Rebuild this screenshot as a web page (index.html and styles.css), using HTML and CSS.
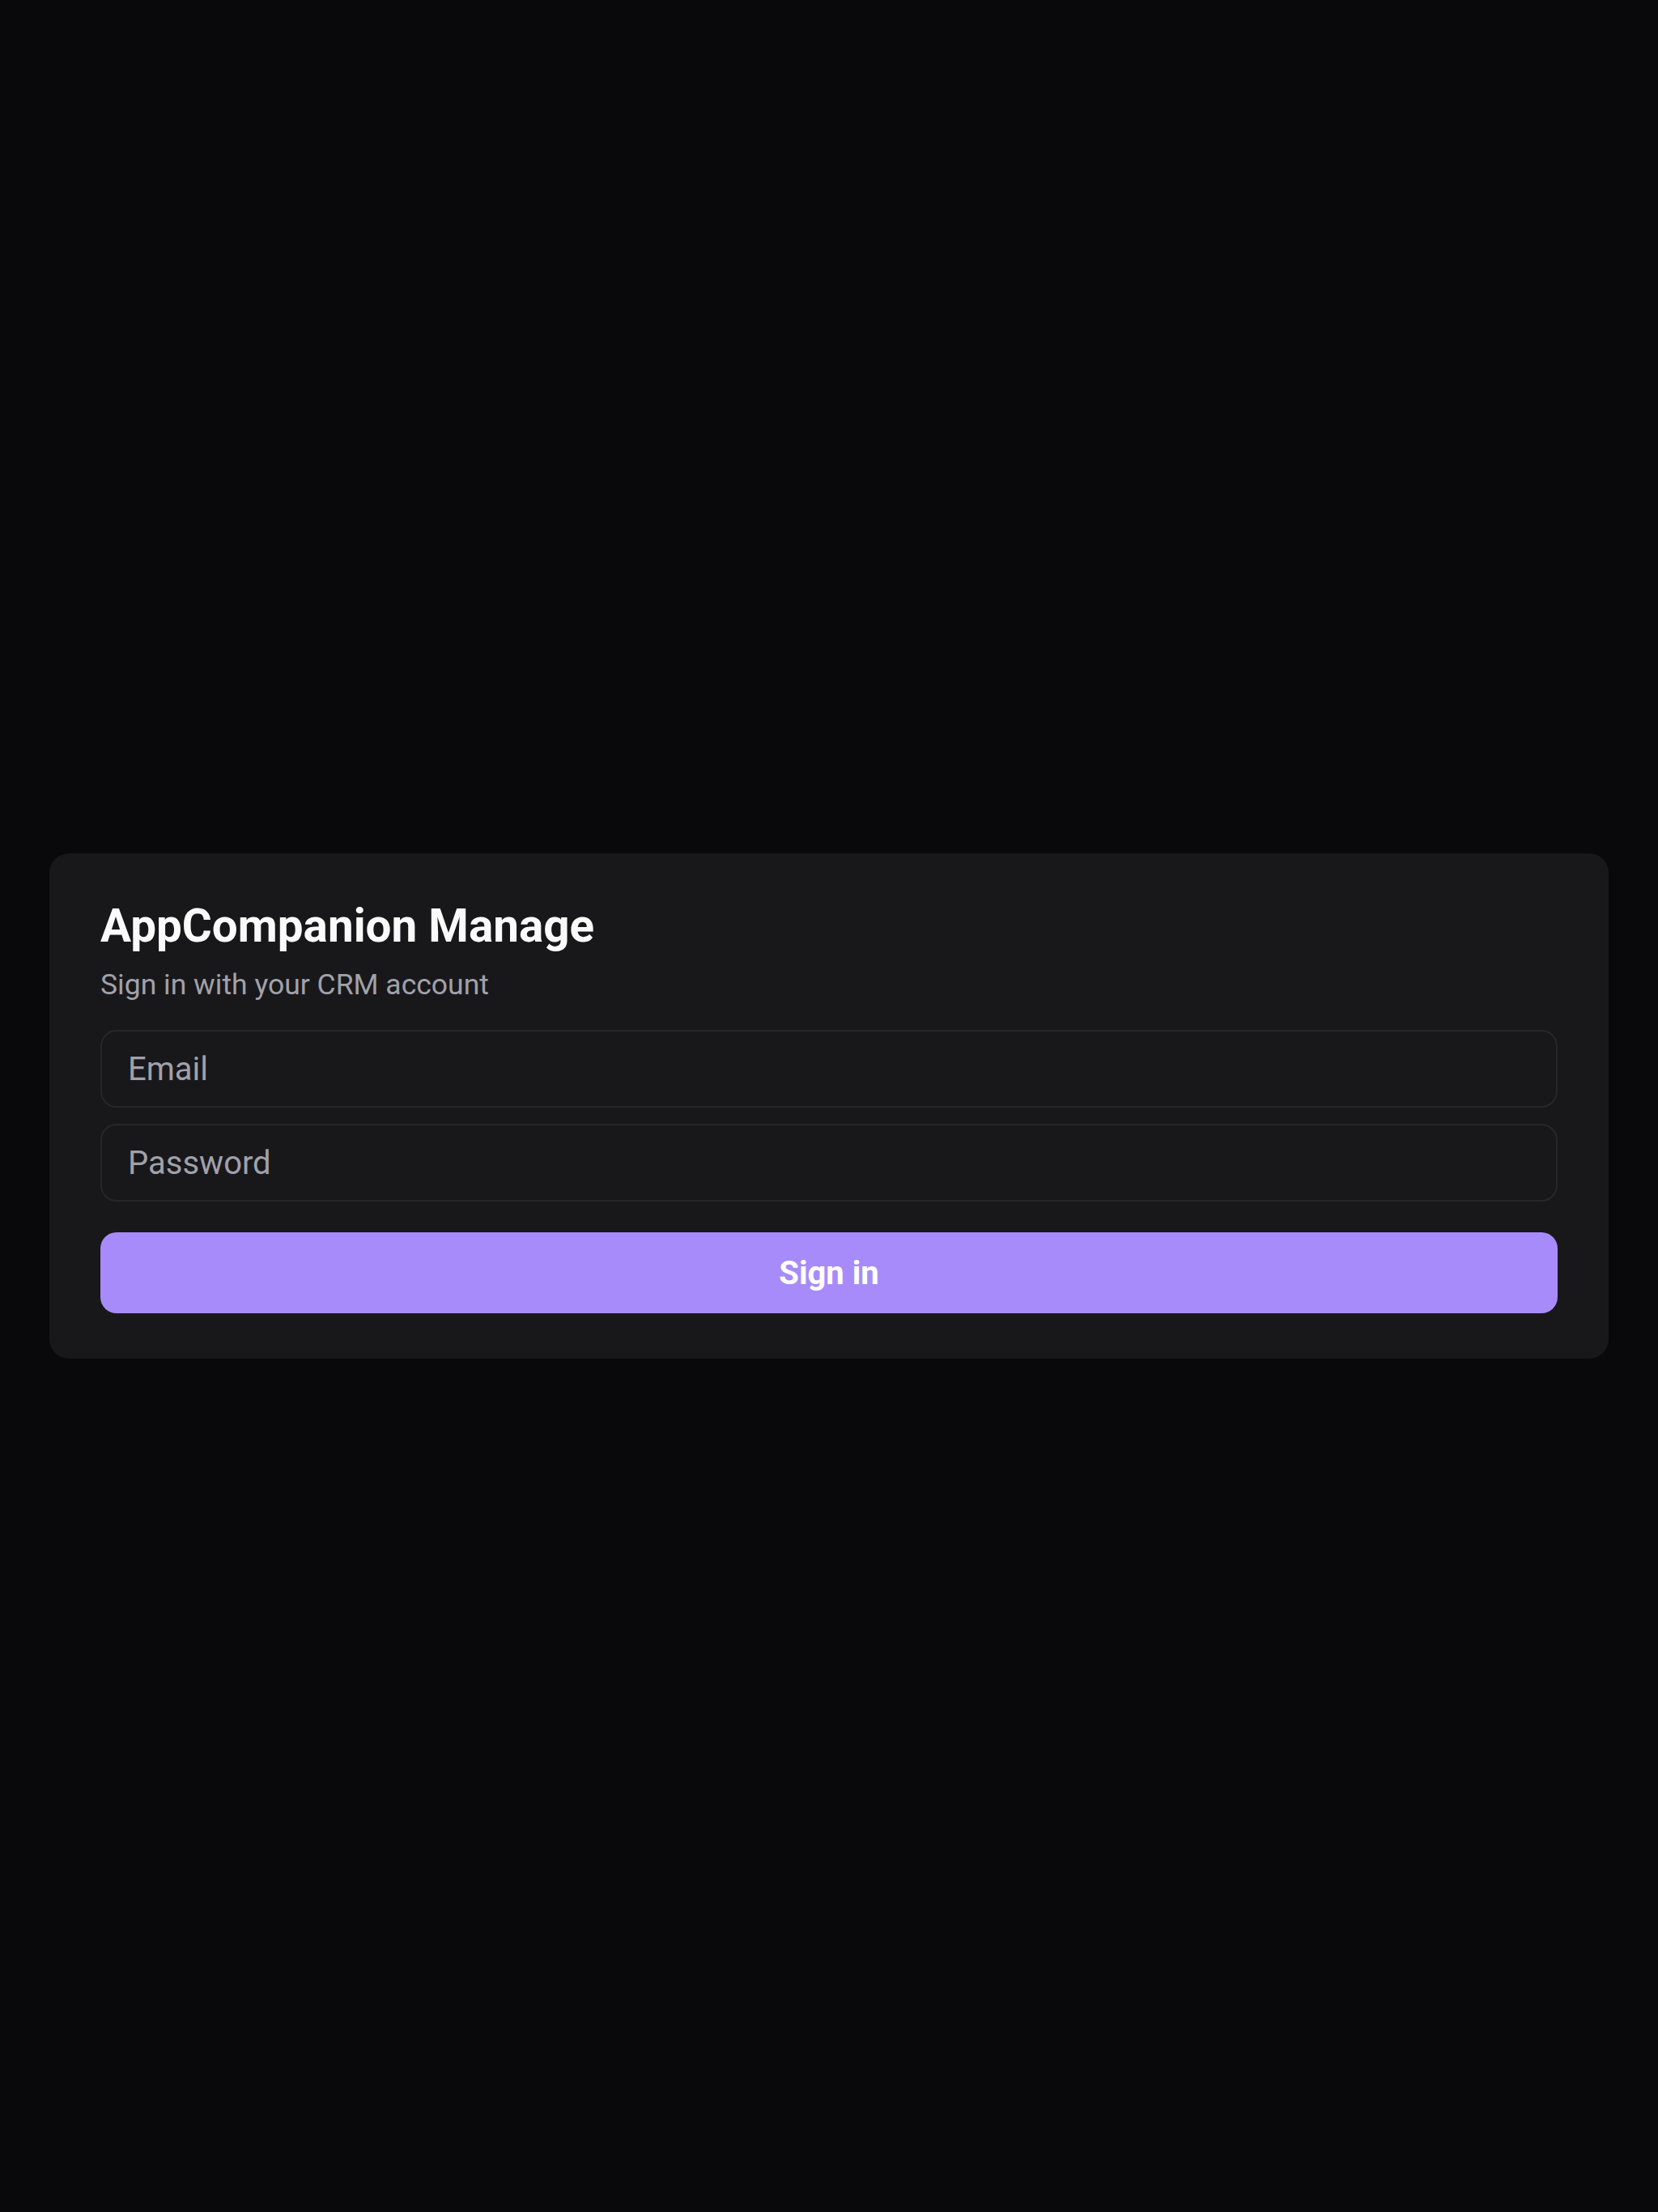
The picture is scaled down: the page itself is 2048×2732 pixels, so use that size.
FILE: index.html
```html
<!DOCTYPE html>
<html lang="en">
<head>
    <meta charset="UTF-8">
    <meta name="viewport" content="width=device-width, initial-scale=1.0">
    <title>AppCompanion Manage</title>
    <link rel="stylesheet" href="styles.css">
</head>
<body>

<div class="screen">
    <!-- Login card -->
    <form class="login-card" onsubmit="return false;">
        <h1 class="login-title">AppCompanion Manage</h1>
        <p class="login-subtitle">Sign in with your CRM account</p>
        <input class="login-input" type="email" placeholder="Email">
        <input class="login-input" type="password" placeholder="Password">
        <button class="login-button" type="submit">Sign in</button>
    </form>
</div>

</body>
</html>
```

FILE: styles.css
```css
html, body {
    margin: 0;
    padding: 0;
    background-color: #09090b;
}
body {
    font-family: Roboto, "Liberation Sans", sans-serif;
    color: #fafafa;
}
.screen {
    min-height: 2732px;
    display: flex;
    align-items: center;
    padding: 0 61px;
    box-sizing: border-box;
}
/* Card */
.login-card {
    flex: 1;
    display: flex;
    flex-direction: column;
    padding: 56px 63px;
    background-color: #18181b;
    border-radius: 24px;
}
.login-title {
    margin: 0;
    font-size: 56.6px;
    line-height: 67px;
    font-weight: 700;
    color: #fafafa;
}
.login-subtitle {
    margin: 15px 0 32px;
    font-size: 35.5px;
    line-height: 48px;
    color: #a1a1aa;
}
.login-input {
    height: 96px;
    margin-bottom: 20px;
    padding: 0 32px;
    box-sizing: border-box;
    font-family: inherit;
    font-size: 40px;
    color: #fafafa;
    background-color: #18181b;
    border: 2px solid #27272a;
    border-radius: 20px;
    outline: none;
}
.login-input::placeholder {
    color: #a1a1aa;
}
.login-button {
    height: 100px;
    margin-top: 18px;
    font-family: inherit;
    font-size: 40px;
    font-weight: 700;
    color: #ffffff;
    background-color: #a78bfa;
    border: none;
    border-radius: 20px;
}
```
